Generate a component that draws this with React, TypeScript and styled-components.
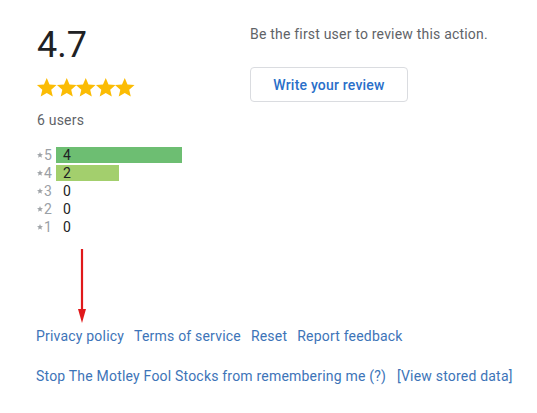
import React from "react"
import styled, { createGlobalStyle } from "styled-components"

const GlobalStyle = createGlobalStyle`
  body {
    margin: 0;
    background: #ffffff;
    font-family: Roboto, "Liberation Sans", Arial, sans-serif;
    letter-spacing: 0.2px;
  }
`

const Page = styled.div`
  position: relative;
  width: 537px;
  height: 413px;
  box-sizing: border-box;
  padding: 24px 0 0 36px;
`

const Top = styled.div`
  display: flex;
`

const LeftCol = styled.div`
  width: 214px;
  display: flex;
  flex-direction: column;
`

const RightCol = styled.div`
  display: flex;
  flex-direction: column;
  align-items: flex-start;
`

const Score = styled.div`
  font-size: 36px;
  line-height: 42px;
  color: #202124;
  padding-left: 1px;
  letter-spacing: 0;
`

const Stars = styled.div`
  display: flex;
  margin-top: 12px;
  margin-left: -1px;
  height: 20px;
  align-items: center;
`

const BigStar = styled.svg`
  width: 23.5px;
  height: 23.5px;
  margin-right: -4px;
  fill: #fbbc04;
`

const Users = styled.div`
  margin-top: 12px;
  padding-left: 1px;
  font-size: 14px;
  line-height: 20px;
  color: #5f6368;
`

const Histogram = styled.div`
  margin-top: 16px;
  display: flex;
  flex-direction: column;
`

const Row = styled.div`
  display: flex;
  align-items: center;
  height: 18px;
`

const RowLabel = styled.div`
  width: 20px;
  display: flex;
  align-items: center;
  color: #9aa0a6;
  font-size: 14px;
  line-height: 16px;
`

const SmallStar = styled.svg`
  width: 6px;
  height: 6px;
  fill: #a0a4a8;
  margin: 0 1px 0 1px;
`

const BarTrack = styled.div`
  position: relative;
  height: 16px;
  width: 140px;
`

const Bar = styled.div<{ $color: string }>`
  height: 16px;
  background: ${(p) => p.$color};
`

const Count = styled.span`
  position: absolute;
  left: 7px;
  top: 0;
  font-size: 14px;
  line-height: 16px;
  color: #202124;
`

const Lead = styled.div`
  font-size: 14px;
  line-height: 20px;
  color: #5f6368;
`

const ReviewButton = styled.button`
  margin-top: 23px;
  width: 158px;
  height: 35px;
  background: #ffffff;
  border: 1px solid #dadce0;
  border-radius: 4px;
  color: #2a6fc9;
  font-family: Roboto, "Liberation Sans", Arial, sans-serif;
  font-size: 14px;
  font-weight: 500;
  letter-spacing: 0.2px;
  cursor: pointer;
`

const Footer = styled.div`
  margin-top: 90px;
  display: flex;
  flex-direction: column;
  gap: 20px;
`

const LinkRow = styled.div<{ $gap: number }>`
  display: flex;
  gap: ${(p) => p.$gap}px;
  font-size: 14px;
  line-height: 20px;
`

const FooterLink = styled.a`
  color: #3d74b8;
  text-decoration: none;
  cursor: pointer;
`

const Arrow = styled.svg`
  position: absolute;
  left: 77px;
  top: 249px;
  width: 10px;
  height: 75px;
`

const starPath =
  "M12 17.27L18.18 21l-1.64-7.03L22 9.24l-7.19-.61L12 2 9.19 8.63 2 9.24l5.46 4.73L5.82 21z"

const rows = [
  { stars: 5, count: 4, color: "#6dbe72" },
  { stars: 4, count: 2, color: "#a3cf6d" },
  { stars: 3, count: 0, color: "#c9d96a" },
  { stars: 2, count: 0, color: "#f4c36b" },
  { stars: 1, count: 0, color: "#ef8a6a" },
]

const App: React.FC = () => {
  const maxCount = Math.max(...rows.map((r) => r.count))
  return (
    <>
      <GlobalStyle />
      <Page>
        <Top>
          <LeftCol>
            <Score>{"4.7"}</Score>
            <Stars>
              {[0, 1, 2, 3, 4].map((i) => (
                <BigStar key={i} viewBox="0 0 24 24">
                  <path d={starPath} />
                </BigStar>
              ))}
            </Stars>
            <Users>{"6 users"}</Users>
            <Histogram>
              {rows.map((row) => (
                <Row key={row.stars}>
                  <RowLabel>
                    <SmallStar viewBox="2 2 20 20">
                      <path d={starPath} />
                    </SmallStar>
                    {row.stars}
                  </RowLabel>
                  <BarTrack>
                    {row.count > 0 && (
                      <Bar
                        $color={row.color}
                        style={{ width: (row.count / maxCount) * 126 }}
                      />
                    )}
                    <Count>{row.count}</Count>
                  </BarTrack>
                </Row>
              ))}
            </Histogram>
          </LeftCol>
          <RightCol>
            <Lead>{"Be the first user to review this action."}</Lead>
            <ReviewButton>{"Write your review"}</ReviewButton>
          </RightCol>
        </Top>
        <Footer>
          <LinkRow $gap={10}>
            <FooterLink>{"Privacy policy"}</FooterLink>
            <FooterLink>{"Terms of service"}</FooterLink>
            <FooterLink>{"Reset"}</FooterLink>
            <FooterLink>{"Report feedback"}</FooterLink>
          </LinkRow>
          <LinkRow $gap={11}>
            <FooterLink>{"Stop The Motley Fool Stocks from remembering me (?)"}</FooterLink>
            <FooterLink>{"[View stored data]"}</FooterLink>
          </LinkRow>
        </Footer>
        <Arrow viewBox="0 0 10 75">
          <line x1="5" y1="0" x2="5" y2="62" stroke="#e0191b" strokeWidth="2.2" />
          <path d="M1 60 L9 60 L5 74 Z" fill="#e0191b" />
        </Arrow>
      </Page>
    </>
  )
}

export default App
